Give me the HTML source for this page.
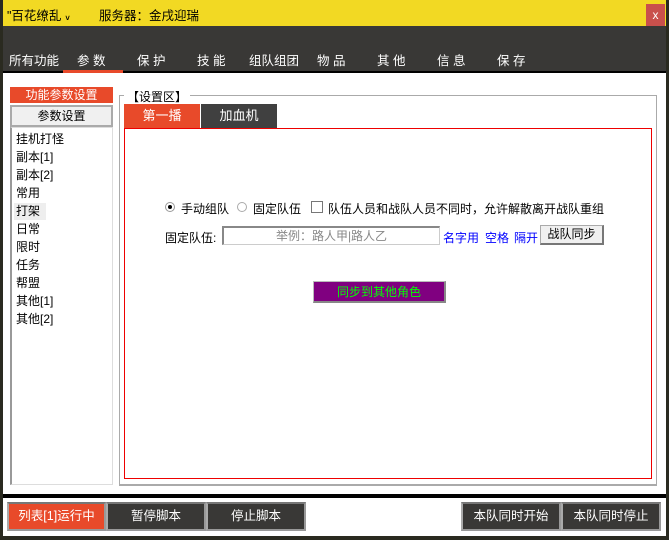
<!DOCTYPE html>
<html><head><meta charset="utf-8"><style>
*{margin:0;padding:0;box-sizing:border-box}
body{width:669px;height:540px;background:#2a2a20;position:relative;overflow:hidden;font-family:"Liberation Sans","Noto Sans CJK SC",sans-serif;font-size:12px;color:#000}
.a{position:absolute}
.win{left:3px;top:0;width:663px;height:537px;background:#fff}
.ttl{left:3px;top:0;width:663px;height:26px;background:#f2d923;font-size:12.5px}
.dark{left:3px;top:26px;width:663px;height:45px;background:#393836}
.blk{left:3px;top:71px;width:663px;height:2px;background:#000}
.tab{top:50px;color:#fff;font-size:12.5px}
.list div{height:18px;line-height:18px;padding-left:6px}
.bb{top:502px;height:29px;background:#393836;color:#fff;text-align:center;line-height:25px;font-size:12.5px;border:2px solid #999;border-top-color:#777;border-left-color:#aaa}
</style></head><body>
<div class="a win"></div>
<div class="a ttl"><span class="a" style="left:4px;top:5px">"百花缭乱 ៴</span><span class="a" style="left:96px;top:5px">服务器：金戌迎瑞</span></div>
<div class="a" style="left:646px;top:4px;width:19px;height:23px;background:#c9504c;color:#fff;text-align:center;line-height:23px;font-size:12px">x</div>
<div class="a dark"></div>
<div class="a blk"></div>
<div class="a" style="left:63px;top:70px;width:60px;height:3px;background:#e84a2a"></div>
<span class="a tab" style="left:9px">所有功能</span>
<span class="a tab" style="left:77px">参 数</span>
<span class="a tab" style="left:137px">保 护</span>
<span class="a tab" style="left:197px">技 能</span>
<span class="a tab" style="left:249px">组队组团</span>
<span class="a tab" style="left:317px">物 品</span>
<span class="a tab" style="left:377px">其 他</span>
<span class="a tab" style="left:437px">信 息</span>
<span class="a tab" style="left:497px">保 存</span>

<div class="a" style="left:10px;top:87px;width:103px;height:16px;background:#e84a2a;color:#fff;text-align:center;line-height:16px">功能参数设置</div>
<div class="a" style="left:10px;top:105px;width:103px;height:22px;background:#f0f0f0;border:2px solid #aaa;text-align:center;line-height:18px">参数设置</div>
<div class="a" style="left:10px;top:127px;width:103px;height:358px;border:1px solid #ddd;border-left:2px solid #999"></div>
<div class="a" style="left:14px;top:203px;width:32px;height:17px;background:#eee"></div>
<div class="a list" style="left:10px;top:130px">
<div>挂机打怪</div><div>副本[1]</div><div>副本[2]</div><div>常用</div><div>打架</div><div>日常</div><div>限时</div><div>任务</div><div>帮盟</div><div>其他[1]</div><div>其他[2]</div></div>

<div class="a" style="left:119px;top:95px;width:538px;height:391px;border:1px solid #aaa;border-bottom-width:2px"></div>
<span class="a" style="left:124px;top:88px;background:#fff;padding:0 3px">【设置区】</span>
<div class="a" style="left:124px;top:104px;width:76px;height:24px;background:#e84a2a;color:#fff;text-align:center;line-height:24px;font-size:13px">第一播</div>
<div class="a" style="left:201px;top:104px;width:76px;height:24px;background:#404040;color:#fff;text-align:center;line-height:24px;font-size:13px">加血机</div>
<div class="a" style="left:124px;top:128px;width:528px;height:351px;border:1px solid #e00"></div>

<div class="a" style="left:165px;top:202px;width:10px;height:10px;border-radius:50%;border:1px solid #999"><div class="a" style="left:2px;top:2px;width:4px;height:4px;border-radius:50%;background:#000"></div></div>
<span class="a" style="left:181px;top:200px">手动组队</span>
<div class="a" style="left:237px;top:202px;width:10px;height:10px;border-radius:50%;border:1px solid #aaa"></div>
<span class="a" style="left:253px;top:200px">固定队伍</span>
<div class="a" style="left:311px;top:201px;width:12px;height:12px;border:1px solid #777"></div>
<span class="a" style="left:328px;top:200px">队伍人员和战队人员不同时，允许解散离开战队重组</span>
<span class="a" style="left:165px;top:229px">固定队伍:</span>
<div class="a" style="left:222px;top:226px;width:218px;height:19px;border:1px solid #ccc;border-top:2px solid #888;border-left:2px solid #888;color:#888;text-align:center;line-height:16px">举例：路人甲|路人乙</div>
<span class="a" style="left:443px;top:229px;color:#00f">名字用</span>
<span class="a" style="left:485px;top:229px;color:#00f">空格</span>
<span class="a" style="left:514px;top:229px;color:#00f">隔开</span>
<div class="a" style="left:540px;top:225px;width:64px;height:20px;background:#f0f0f0;border:1px solid #aaa;border-right:2px solid #777;border-bottom:2px solid #777;text-align:center;line-height:17px">战队同步</div>
<div class="a" style="left:313px;top:281px;width:133px;height:22px;background:#800080;color:#0f0;text-align:center;line-height:20px;border:1px solid #bbb;border-right:2px solid #888;border-bottom:2px solid #888">同步到其他角色</div>

<div class="a" style="left:3px;top:494px;width:663px;height:4px;background:#000"></div>
<div class="a" style="left:3px;top:536px;width:663px;height:4px;background:#2a2a20"></div>
<div class="a bb" style="left:7px;width:99px;background:#e84a2a">列表[1]运行中</div>
<div class="a bb" style="left:106px;width:100px">暂停脚本</div>
<div class="a bb" style="left:206px;width:100px">停止脚本</div>
<div class="a bb" style="left:461px;width:100px">本队同时开始</div>
<div class="a bb" style="left:561px;width:100px">本队同时停止</div>
</body></html>
